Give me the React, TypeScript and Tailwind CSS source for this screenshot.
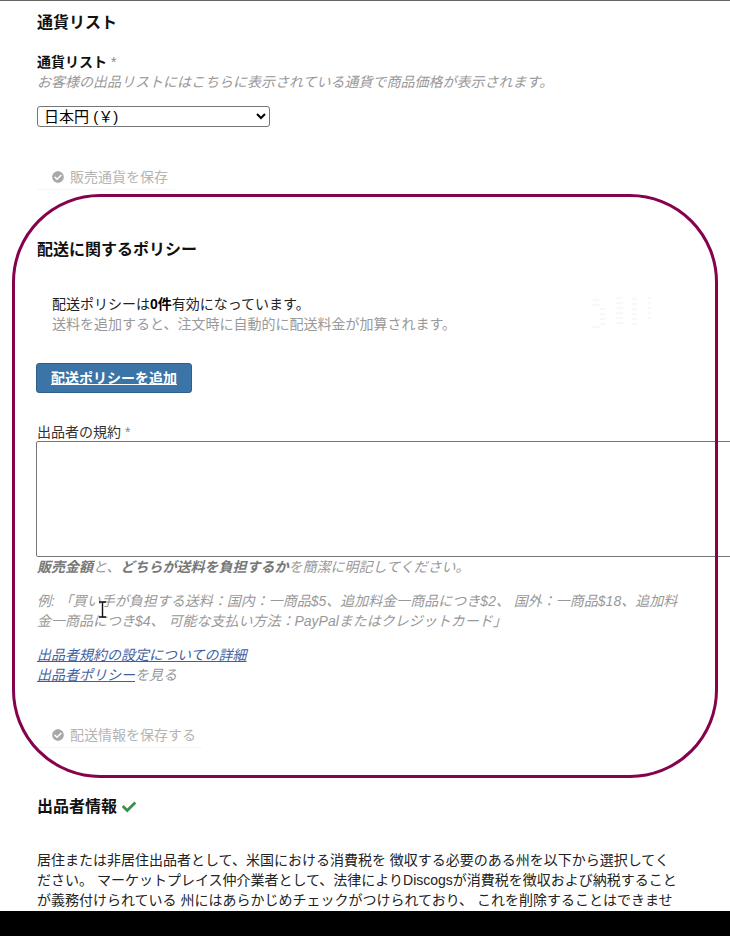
import { FaCheck, FaCheckCircle } from "react-icons/fa";

function SaveButton({ label }: { label: string }) {
  return (
    <div className="flex h-[26px] w-fit items-center gap-[6px] border-b border-[#f6f6f6] pl-[15px] pr-[6px] text-sm text-[#b4b4b4]">
      <FaCheckCircle className="h-3 w-3 text-[#a8a8a8]" />
      <span>{label}</span>
    </div>
  );
}

function FadedRows() {
  return (
    <svg width="90" height="40" viewBox="0 0 90 40" className="mr-[62px] shrink-0 text-[#f0f0f0]" stroke="currentColor">
      <path d="M14 6h7M14 11h8M22 15h6M22 20h6M22 25h6M22 30h6M14 33h8M38 4h6M38 9h7M38 14h7M38 19h7M38 24h7M38 29h7M54 5h5M54 10h5M54 15h5M54 20h5M54 25h5M54 30h5M70 4h3M70 9h3M70 14h3M70 19h3M70 24h3" />
    </svg>
  );
}

export default function App() {
  return (
    <div className="relative flex h-[936px] w-[730px] flex-col overflow-hidden bg-white font-['Liberation_Sans','Noto_Sans_CJK_JP',sans-serif] text-sm leading-5 text-[#222]">
      <main className="h-[911px] shrink-0 overflow-hidden border-t border-[#666] pl-[37px] pt-[10px]">
        {/* 通貨 */}
        <h2 className="text-base font-bold text-[#111]">通貨リスト</h2>
        <div className="mt-[17px] font-bold text-[#111]">
          通貨リスト <span className="font-normal text-[#888]">*</span>
        </div>
        <p className="italic text-[#999]">お客様の出品リストにはこちらに表示されている通貨で商品価格が表示されます。</p>
        <select className="mt-[14px] block h-[21px] w-[233px] rounded-[3px] border border-[#767676] bg-white pl-[2px] text-[15px] leading-5 text-black">
          <option>日本円 (￥)</option>
        </select>
        <div className="mt-[37px]">
          <SaveButton label="販売通貨を保存" />
        </div>

        {/* 配送 */}
        <h2 className="mt-[48px] text-base font-bold text-[#111]">配送に関するポリシー</h2>
        <div className="mt-[32px] flex items-center justify-between">
          <div className="pl-[15px]">
            <p>
              配送ポリシーは<b className="text-black">0件</b>有効になっています。
            </p>
            <p className="text-[#999]">送料を追加すると、注文時に自動的に配送料金が加算されます。</p>
          </div>
          <FadedRows />
        </div>
        <button className="-ml-px mt-[29px] block h-[30px] w-[156px] rounded-[3px] border border-[#2f5f8a] bg-[#3b74a6] text-sm font-bold text-white underline">
          配送ポリシーを追加
        </button>
        <div className="mt-[29px] text-[#333]">
          出品者の規約 <span className="text-[#888]">*</span>
        </div>
        <textarea className="-ml-px -mt-px block h-[116px] w-[720px] rounded-[2px] border border-[#767676] bg-white" />
        <p className="italic text-[#999]">
          <b className="text-[#777]">販売金額</b>と、<b className="text-[#777]">どちらが送料を負担するか</b>を簡潔に明記してください。
        </p>
        <p className="mt-[14px] w-[650px] italic text-[#999]">
          例: 「買い手が負担する送料：国内：一商品$5、追加料金一商品につき$2、 国外：一商品$18、追加料金一商品につき$4、 可能な支払い方法：PayPalまたはクレジットカード」
        </p>
        <div className="mt-[14px] italic text-[#999]">
          <a className="block text-[#3f5f9f] underline">出品者規約の設定についての詳細</a>
          <div>
            <a className="text-[#3f5f9f] underline">出品者ポリシー</a>を見る
          </div>
        </div>
        <div className="mt-[37px]">
          <SaveButton label="配送情報を保存する" />
        </div>

        {/* 出品者 */}
        <h2 className="mt-[47px] flex items-center gap-[5px] text-base font-bold text-[#111]">
          出品者情報 <FaCheck className="h-[14px] w-[14px] text-[#3a8f4b]" />
        </h2>
        <p className="mt-[31px] w-[645px] text-[#222]">
          居住または非居住出品者として、米国における消費税を 徴収する必要のある州を以下から選択してください。 マーケットプレイス仲介業者として、法律によりDiscogsが消費税を徴収および納税することが義務付けられている 州にはあらかじめチェックがつけられており、 これを削除することはできません。
        </p>
      </main>
      <footer className="flex-1 bg-black" />

      {/* annotation ring */}
      <div className="pointer-events-none absolute left-[12px] top-[194px] h-[584px] w-[706px] rounded-[88px] border-[3px] border-[#85024c]" />
      {/* text cursor */}
      <svg width="9" height="17" viewBox="0 0 9 17" className="pointer-events-none absolute left-[98px] top-[601px]" fill="none" stroke="#111" strokeWidth="1.4">
        <path d="M1 1h7M4.500 1v15M1 16h7" />
      </svg>
    </div>
  );
}
